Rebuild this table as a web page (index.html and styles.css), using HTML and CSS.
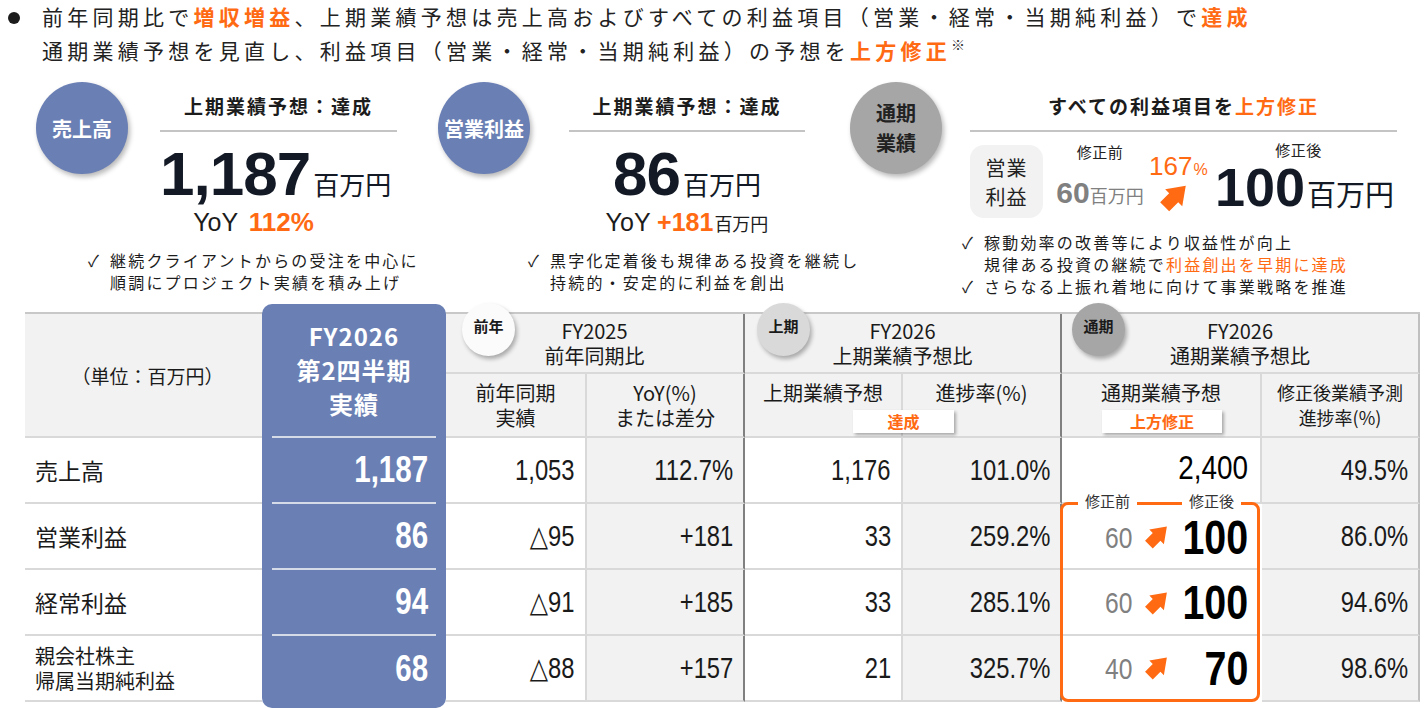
FILE: index.html
```html
<!DOCTYPE html>
<html lang="ja">
<head>
<meta charset="utf-8">
<title>決算ハイライト</title>
<link rel="stylesheet" href="styles.css">
</head>
<body>
<svg class="defs" width="0" height="0" aria-hidden="true">
  <symbol id="arr" viewBox="-10 -9 19 19">
    <g transform="rotate(-45)"><polygon points="-9,-4.5 0,-4.5 0,-8.5 12,0 0,8.5 0,4.5 -9,4.5"/></g>
  </symbol>
</svg>

<header class="lead">
  <p><span class="dot"></span>前年同期比で<em>増収増益</em>、上期業績予想は売上高およびすべての利益項目（営業・経常・当期純利益）で<em>達成</em></p>
  <p>通期業績予想を見直し、利益項目（営業・経常・当期純利益）の予想を<em>上方修正</em><sup class="kome">※</sup></p>
</header>

<section class="kpis">
  <div class="kpi kpi-sales">
    <div class="circle">売上高</div>
    <div class="kpi-main">
      <h2 class="kpi-title">上期業績予想：達成</h2>
      <div class="kpi-value shift"><span class="big">1,187</span><span class="unit">百万円</span></div>
      <div class="kpi-yoy yoy-left">YoY <b class="or yoy-pct">112%</b></div>
    </div>
    <ul class="notes notes-sales">
      <li><span class="chk">✓</span>継続クライアントからの受注を中心に<br>順調にプロジェクト実績を積み上げ</li>
    </ul>
  </div>

  <div class="kpi kpi-op">
    <div class="circle">営業利益</div>
    <div class="kpi-main">
      <h2 class="kpi-title">上期業績予想：達成</h2>
      <div class="kpi-value"><span class="big">86</span><span class="unit">百万円</span></div>
      <div class="kpi-yoy">YoY <b class="or">+181</b><span class="yoy-unit">百万円</span></div>
    </div>
    <ul class="notes notes-op">
      <li><span class="chk">✓</span>黒字化定着後も規律ある投資を継続し<br>持続的・安定的に利益を創出</li>
    </ul>
  </div>

  <div class="kpi kpi-full">
    <div class="circle circle-gray">通期<br>業績</div>
    <div class="kpi-main">
      <h2 class="kpi-title">すべての利益項目を<span class="or">上方修正</span></h2>
      <div class="rv-row">
        <div class="rv-box">営業<br>利益</div>
        <div class="rv-col rv-before">
          <div class="rv-label">修正前</div>
          <div class="rv-old"><span class="n60">60</span><span class="u">百万円</span></div>
        </div>
        <div class="rv-col rv-mid">
          <div class="rv-pct"><span class="p">167</span><span class="pc">%</span></div>
          <svg class="arrow-lg"><use href="#arr"/></svg>
        </div>
        <div class="rv-col rv-after">
          <div class="rv-label rv-label-after">修正後</div>
          <div class="rv-new"><span class="n100">100</span><span class="u2">百万円</span></div>
        </div>
      </div>
    </div>
    <ul class="notes notes-full">
      <li><span class="chk">✓</span>稼動効率の改善等により収益性が向上<br>規律ある投資の継続で<span class="or">利益創出を早期に達成</span></li>
      <li><span class="chk">✓</span>さらなる上振れ着地に向けて事業戦略を推進</li>
    </ul>
  </div>
</section>

<section class="tbl">
  <div class="c-unit">（単位：百万円）</div>

  <div class="bluecol">
    <div class="b-head">FY2026<br>第2四半期<br>実績</div>
    <div class="b-cell"><span class="nx">1,187</span></div>
    <div class="b-cell"><span class="nx">86</span></div>
    <div class="b-cell"><span class="nx">94</span></div>
    <div class="b-cell last"><span class="nx">68</span></div>
  </div>

  <div class="c-group g1"><span class="pill pill-white">前年</span>FY2025<br>前年同期比</div>
  <div class="c-group g2"><span class="pill pill-light">上期</span>FY2026<br>上期業績予想比</div>
  <div class="c-group g3"><span class="pill pill-dark">通期</span>FY2026<br>通期業績予想比</div>

  <div class="c-sub k3 lt">前年同期<br>実績</div>
  <div class="c-sub k4 dk">YoY(%)<br>または差分</div>
  <div class="c-sub k5 lt">上期業績予想</div>
  <div class="c-sub k6 dk">進捗率(%)</div>
  <div class="c-sub k7 lt">通期業績予想</div>
  <div class="c-sub k8 ed small">修正後業績予測<br>進捗率(%)</div>

  <div class="tag tag-ok">達成</div>
  <div class="tag tag-up">上方修正</div>

  <!-- row: 売上高 -->
  <div class="td lbl r3">売上高</div>
  <div class="td k3 lt r3"><span class="nx">1,053</span></div>
  <div class="td k4 dk gy r3"><span class="nx">112.7%</span></div>
  <div class="td k5 lt r3"><span class="nx">1,176</span></div>
  <div class="td k6 dk gy r3"><span class="nx">101.0%</span></div>
  <div class="td k7 lt r3 v2400"><span class="nx">2,400</span></div>
  <div class="td k8 ed gy r3"><span class="nx">49.5%</span></div>

  <!-- row: 営業利益 -->
  <div class="td lbl r4">営業利益</div>
  <div class="td k3 lt r4"><span class="nx">△95</span></div>
  <div class="td k4 dk gy r4"><span class="nx">+181</span></div>
  <div class="td k5 lt r4"><span class="nx">33</span></div>
  <div class="td k6 dk gy r4"><span class="nx">259.2%</span></div>
  <div class="td k8 ed gy r4"><span class="nx">86.0%</span></div>

  <!-- row: 経常利益 -->
  <div class="td lbl r5">経常利益</div>
  <div class="td k3 lt r5"><span class="nx">△91</span></div>
  <div class="td k4 dk gy r5"><span class="nx">+185</span></div>
  <div class="td k5 lt r5"><span class="nx">33</span></div>
  <div class="td k6 dk gy r5"><span class="nx">285.1%</span></div>
  <div class="td k8 ed gy r5"><span class="nx">94.6%</span></div>

  <!-- row: 純利益 -->
  <div class="td lbl lbl-2 r6">親会社株主<br>帰属当期純利益</div>
  <div class="td k3 lt r6"><span class="nx">△88</span></div>
  <div class="td k4 dk gy r6"><span class="nx">+157</span></div>
  <div class="td k5 lt r6"><span class="nx">21</span></div>
  <div class="td k6 dk gy r6"><span class="nx">325.7%</span></div>
  <div class="td k8 ed gy r6"><span class="nx">98.6%</span></div>

  <div class="obox">
    <span class="olabel ol-before">修正前</span>
    <span class="olabel ol-after">修正後</span>
    <div class="orow"><span class="old"><span class="nx">60</span></span><svg class="arrow-sm"><use href="#arr"/></svg><span class="new"><span class="nx">100</span></span></div>
    <div class="orow"><span class="old"><span class="nx">60</span></span><svg class="arrow-sm"><use href="#arr"/></svg><span class="new"><span class="nx">100</span></span></div>
    <div class="orow"><span class="old"><span class="nx">40</span></span><svg class="arrow-sm"><use href="#arr"/></svg><span class="new"><span class="nx">70</span></span></div>
  </div>
</section>
</body>
</html>
```

FILE: styles.css
```css
* { box-sizing: border-box; }

html, body {
  margin: 0;
  padding: 0;
  background: #ffffff;
}

body {
  width: 1424px;
  height: 708px;
  overflow: hidden;
  font-family: "Liberation Sans", "Noto Sans CJK JP", sans-serif;
  color: #1c1c1c;
}

.defs { position: absolute; width: 0; height: 0; overflow: hidden; }

.or { color: #ff6a13; }

/* ---------- lead ---------- */
.lead {
  padding: 1px 0 0 42px;
  font-size: 21px;
  line-height: 34px;
  letter-spacing: 4.25px;
  color: #222;
}
.lead p { margin: 0; white-space: nowrap; }
.lead em { font-style: normal; font-weight: bold; color: #ff6a13; }
.dot {
  display: inline-block;
  width: 12px;
  height: 12px;
  margin-left: -34px;
  margin-right: 22px;
  border-radius: 50%;
  background: #1c1c1c;
  vertical-align: 1px;
}
.kome {
  font-size: 14px;
  letter-spacing: 0;
  vertical-align: 9px;
  line-height: 0;
  color: #333;
}

/* ---------- KPI blocks ---------- */
.kpis {
  display: flex;
  align-items: flex-start;
  margin-top: 13px;
  padding-left: 36px;
}
.kpi { display: grid; }
.kpi-sales { width: 402px; grid-template-columns: 92px 237px; column-gap: 32px; }
.kpi-op { width: 412px; grid-template-columns: 92px 236px; column-gap: 39px; }
.kpi-full { grid-template-columns: 92px 427px; column-gap: 28px; }

.circle {
  grid-row: 1;
  grid-column: 1;
  align-self: start;
  width: 92px;
  height: 92px;
  border-radius: 50%;
  background: #6a7fb4;
  color: #fff;
  font-family: "Noto Sans CJK JP", sans-serif;
  font-weight: bold;
  font-size: 20px;
  display: flex;
  align-items: center;
  justify-content: center;
  text-align: center;
  box-shadow: 2px 3px 5px rgba(0, 0, 0, 0.28);
}
.circle-gray {
  background: #a6a6a6;
  color: #222;
  line-height: 30px;
  font-size: 20px;
}

.kpi-main { grid-row: 1; grid-column: 2; }

.kpi-title {
  margin: 10px 0 0;
  padding-bottom: 10px;
  border-bottom: 2px solid #c4c4c4;
  font-family: "Noto Sans CJK JP", sans-serif;
  font-size: 19px;
  font-weight: bold;
  line-height: 28px;
  letter-spacing: 2px;
  text-align: center;
  color: #1c1c1c;
}

.kpi-value {
  margin-top: 12px;
  height: 60px;
  line-height: 60px;
  text-align: center;
  white-space: nowrap;
  color: #131a26;
}
.kpi-value.shift { padding-right: 23px; }
.big { font-size: 62px; font-weight: bold; letter-spacing: -1px; }
.unit { font-size: 26px; margin-left: 3px; }

.kpi-yoy {
  margin-top: 3px;
  height: 30px;
  line-height: 30px;
  font-size: 25px;
  text-align: center;
  white-space: nowrap;
  color: #1c1c1c;
}
.kpi-yoy b { font-weight: bold; }
.yoy-left { padding-right: 50px; }
.yoy-pct { font-size: 26px; margin-left: 4px; }
.yoy-unit { font-size: 18px; margin-left: 1px; }

.notes {
  grid-row: 2;
  grid-column: 1 / -1;
  margin: 12px 0 0;
  padding: 0;
  list-style: none;
  font-family: "Noto Sans CJK JP", sans-serif;
  font-size: 16px;
  line-height: 22px;
  letter-spacing: 2.2px;
  white-space: nowrap;
  color: #1c1c1c;
}
.notes li { padding-left: 22px; text-indent: -22px; }
.chk {
  display: inline-block;
  width: 22px;
  text-indent: 0;
  letter-spacing: 0;
}
.notes-sales { margin-left: 52px; }
.notes-op { margin-left: 90px; }
.notes-full { margin-left: 112px; margin-top: 13px; }

/* right KPI revision row */
.rv-row {
  display: flex;
  align-items: flex-start;
  height: 76px;
  margin-top: 10px;
}
.rv-box {
  width: 73px;
  height: 73px;
  margin-top: 3px;
  border-radius: 14px;
  background: #f2f2f2;
  display: flex;
  align-items: center;
  justify-content: center;
  text-align: center;
  font-family: "Noto Sans CJK JP", sans-serif;
  font-size: 20px;
  line-height: 29px;
  letter-spacing: 1px;
  color: #222;
}
.rv-col { display: flex; flex-direction: column; align-items: center; }
.rv-label {
  font-family: "Noto Sans CJK JP", sans-serif;
  font-size: 15px;
  line-height: 20px;
  letter-spacing: 0.5px;
  color: #222;
}
.rv-before { margin-left: 13px; width: 88px; }
.rv-old {
  margin-top: 11px;
  line-height: 40px;
  white-space: nowrap;
  color: #808080;
}
.n60 { font-size: 30px; font-weight: bold; }
.u { font-size: 18px; }

.rv-mid { margin-left: 5px; width: 60px; margin-top: 9px; align-items: flex-start; }
.rv-pct { line-height: 30px; color: #ff6a13; white-space: nowrap; }
.rv-pct .p { font-size: 26px; }
.rv-pct .pc { font-size: 16px; margin-left: 1px; }
.arrow-lg { display: block; width: 28px; height: 27px; margin: 0 0 0 10px; fill: #ff6a13; }

.rv-after { margin-left: 6px; }
.rv-label-after { margin-top: -2px; padding-right: 12px; }
.rv-new { line-height: 54px; white-space: nowrap; color: #131a26; }
.n100 { font-size: 54px; font-weight: bold; }
.u2 { font-size: 29px; margin-left: 2px; }

/* ---------- table ---------- */
.tbl {
  display: grid;
  grid-template-columns: 237px 184px 141px 158px 158px 159px 200px 158px;
  grid-template-rows: 60px 64px 66px 66px 66px 66px;
  margin: 15px 0 0 25px;
  width: 1395px;
  border-top: 2px solid #c8c8c8;
  color: #1a1a1a;
}

/* Arial-Narrow-like digits: Liberation Sans compressed horizontally */
.nx {
  display: inline-block;
  font-family: "Liberation Sans", "DejaVu Sans", sans-serif;
  transform: scaleX(0.82);
  transform-origin: 100% 50%;
  white-space: nowrap;
}

.k3 { grid-column: 3; }
.k4 { grid-column: 4; }
.k5 { grid-column: 5; }
.k6 { grid-column: 6; }
.k7 { grid-column: 7; }
.k8 { grid-column: 8; }
.r3 { grid-row: 3; }
.r4 { grid-row: 4; }
.r5 { grid-row: 5; }
.r6 { grid-row: 6; }

.lt { border-right: 2px solid #d9d9d9; }
.dk { border-right: 2px solid #808080; }
.ed { border-right: 2px solid #c0c0c0; }
.gy { background: #f2f2f2; }

.c-unit {
  grid-column: 1;
  grid-row: 1 / 3;
  background: #f2f2f2;
  border-bottom: 2px solid #d9d9d9;
  display: flex;
  align-items: center;
  justify-content: center;
  font-family: "Noto Sans CJK JP", sans-serif;
  font-size: 19px;
  padding-left: 8px;
}

.bluecol {
  grid-column: 2;
  grid-row: 1 / 7;
  margin: -10px 0 -6px;
  border-radius: 10px;
  background: #6a7fb4;
  color: #fff;
  display: flex;
  flex-direction: column;
}
.b-head {
  height: 134px;
  margin: 0 10px;
  border-bottom: 2px solid #d6dbe8;
  display: flex;
  align-items: center;
  justify-content: center;
  text-align: center;
  font-family: "Noto Sans CJK JP", sans-serif;
  font-weight: bold;
  font-size: 24px;
  line-height: 34px;
  letter-spacing: 1px;
}
.b-cell {
  height: 66px;
  margin: 0 10px;
  padding-right: 8px;
  border-bottom: 2px solid #d6dbe8;
  display: flex;
  align-items: center;
  justify-content: flex-end;
  font-size: 36px;
  font-weight: bold;
}
.b-cell.last { border-bottom: none; }

.c-group {
  grid-row: 1;
  position: relative;
  background: #f2f2f2;
  border-bottom: 2px solid #d9d9d9;
  display: flex;
  flex-direction: column;
  align-items: center;
  justify-content: center;
  text-align: center;
  font-family: "Noto Sans CJK JP", sans-serif;
  font-size: 20px;
  line-height: 25px;
}
.g1 { grid-column: 3 / 5; border-right: 2px solid #808080; }
.g2 { grid-column: 5 / 7; border-right: 2px solid #808080; }
.g3 { grid-column: 7 / 9; border-right: 2px solid #c0c0c0; }

.pill {
  position: absolute;
  top: -11px;
  width: 53px;
  height: 53px;
  border-radius: 50%;
  display: flex;
  align-items: center;
  justify-content: center;
  padding-bottom: 8px;
  font-size: 15px;
  font-weight: bold;
  line-height: 20px;
  color: #1a1a1a;
  box-shadow: 2px 3px 4px rgba(0, 0, 0, 0.3);
}
.g1 .pill { left: 16px; }
.g2 .pill { left: 12px; }
.g3 .pill { left: 10px; }
.pill-white { background: #fbfbfb; }
.pill-light { background: #d9d9d9; }
.pill-dark { background: #a6a6a6; }

.c-sub {
  grid-row: 2;
  background: #f2f2f2;
  border-bottom: 2px solid #d9d9d9;
  padding-top: 6px;
  text-align: center;
  font-family: "Noto Sans CJK JP", sans-serif;
  font-size: 20px;
  line-height: 25px;
}
.c-sub.small { font-size: 18px; }

.tag {
  grid-row: 2;
  align-self: end;
  justify-self: center;
  margin-bottom: 5px;
  height: 23px;
  background: #fff;
  box-shadow: 2px 2px 3px rgba(0, 0, 0, 0.3);
  color: #ff6a13;
  font-family: "Noto Sans CJK JP", sans-serif;
  font-weight: bold;
  font-size: 16px;
  line-height: 23px;
  text-align: center;
}
.tag-ok { grid-column: 5 / 7; width: 101px; }
.tag-up { grid-column: 7; width: 120px; }

.td {
  border-bottom: 2px solid #d9d9d9;
  display: flex;
  align-items: center;
  justify-content: flex-end;
  padding-right: 10px;
  font-size: 29px;
}
.td.lbl {
  grid-column: 1;
  justify-content: flex-start;
  padding: 0 0 0 10px;
  font-family: "Noto Sans CJK JP", sans-serif;
  font-size: 23px;
}
.td.lbl-2 { font-size: 20px; line-height: 25px; }
.v2400 { font-size: 34px; color: #000; padding-bottom: 6px; padding-right: 12px; }

.obox {
  grid-column: 7;
  grid-row: 4 / 7;
  position: relative;
  margin: -2px 2px 0 -2px;
  border: 3px solid #ff6a13;
  border-radius: 8px;
  background: #fff;
  display: grid;
  grid-template-rows: 65px 66px 1fr;
}
.olabel {
  position: absolute;
  top: -12px;
  padding: 0 7px;
  background: #fff;
  font-family: "Noto Sans CJK JP", sans-serif;
  font-size: 15px;
  line-height: 16px;
  color: #333;
}
.ol-before { left: 15px; }
.ol-after { left: 119px; }
.orow {
  display: flex;
  align-items: center;
  justify-content: flex-end;
  padding-right: 9px;
  padding-top: 2px;
  border-bottom: 2px solid #d9d9d9;
}
.orow:last-of-type { border-bottom: none; }
.old { display: flex; justify-content: flex-end; font-size: 30px; color: #808080; }
.arrow-sm { width: 24px; height: 23px; margin: 0 0 0 12px; fill: #ff6a13; }
.new {
  display: flex;
  justify-content: flex-end;
  width: 80px;
  font-size: 48px;
  line-height: 52px;
  font-weight: bold;
  color: #000;
}
```
